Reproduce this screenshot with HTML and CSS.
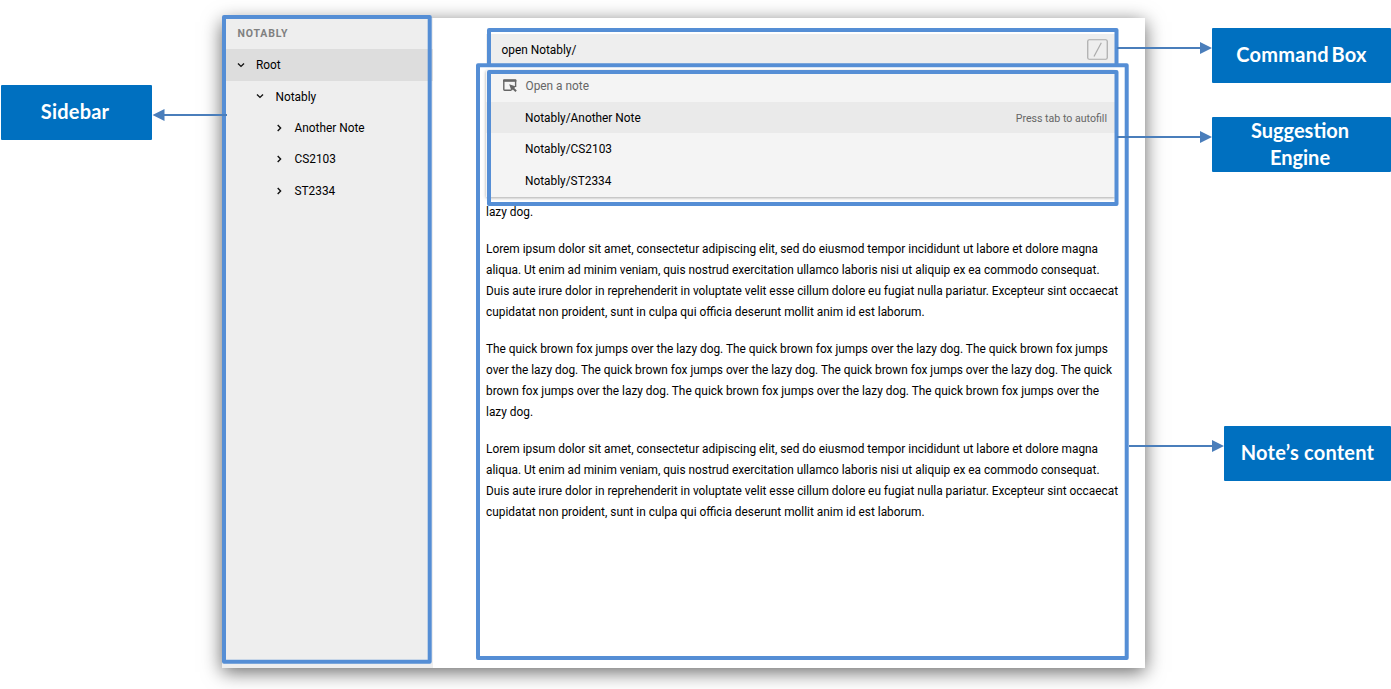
FILE: index.html
```html
<!DOCTYPE html>
<html lang="en">
<head>
<meta charset="utf-8">
<title>Notably</title>
<link rel="stylesheet" href="styles.css">
</head>
<body>
<div class="window">
  <aside class="sidebar">
    <h1 class="brand">NOTABLY</h1>
    <div class="node root"><svg class="chev" viewBox="0 0 8 8"><path d="M1 2.5 4 5.4 7 2.5"/></svg><span>Root</span></div>
    <div class="node level1"><svg class="chev" viewBox="0 0 8 8"><path d="M1 2.5 4 5.4 7 2.5"/></svg><span>Notably</span></div>
    <div class="node level2"><svg class="chev" viewBox="0 0 8 8"><path d="M2.7 1 5.6 4 2.7 7"/></svg><span>Another Note</span></div>
    <div class="node level2"><svg class="chev" viewBox="0 0 8 8"><path d="M2.7 1 5.6 4 2.7 7"/></svg><span>CS2103</span></div>
    <div class="node level2"><svg class="chev" viewBox="0 0 8 8"><path d="M2.7 1 5.6 4 2.7 7"/></svg><span>ST2334</span></div>
  </aside>
  <main class="main">
    <div class="command"><span>open Notably/</span>
      <svg class="slash" viewBox="0 0 21 21"><rect x=".75" y=".75" width="19.5" height="19.5" rx="1.5"/><path d="M7 17.5 14.3 3.8"/></svg>
    </div>
    <div class="suggestions">
      <div class="row heading">
        <svg class="open-icon" viewBox="0 0 14 14"><path class="frame" d="M8 11.3H1.5Q.8 11.3.8 10.6V1.5H12.6V8"/><path class="bar" d="M.1 1.2Q.1.2 1.2.2H12.3Q13.3.2 13.3 1.2V2.8H.1Z"/><path class="bar" d="M6.2 5.2 13 7.6 11.2 8.9 13.8 11.6 12.4 13 9.8 10.4 8.5 12Z"/></svg>
        <span>Open a note</span>
      </div>
      <div class="row active"><span>Notably/Another Note</span><span class="hint">Press tab to autofill</span></div>
      <div class="row"><span>Notably/CS2103</span></div>
      <div class="row"><span>Notably/ST2334</span></div>
    </div>
    <article class="note">
      <p>lazy dog.</p>
      <p>Lorem ipsum dolor sit amet, consectetur adipiscing elit, sed do eiusmod tempor incididunt ut labore et dolore magna<br>aliqua. Ut enim ad minim veniam, quis nostrud exercitation ullamco laboris nisi ut aliquip ex ea commodo consequat.<br>Duis aute irure dolor in reprehenderit in voluptate velit esse cillum dolore eu fugiat nulla pariatur. Excepteur sint occaecat<br>cupidatat non proident, sunt in culpa qui officia deserunt mollit anim id est laborum.</p>
      <p>The quick brown fox jumps over the lazy dog. The quick brown fox jumps over the lazy dog. The quick brown fox jumps<br>over the lazy dog. The quick brown fox jumps over the lazy dog. The quick brown fox jumps over the lazy dog. The quick<br>brown fox jumps over the lazy dog. The quick brown fox jumps over the lazy dog. The quick brown fox jumps over the<br>lazy dog.</p>
      <p>Lorem ipsum dolor sit amet, consectetur adipiscing elit, sed do eiusmod tempor incididunt ut labore et dolore magna<br>aliqua. Ut enim ad minim veniam, quis nostrud exercitation ullamco laboris nisi ut aliquip ex ea commodo consequat.<br>Duis aute irure dolor in reprehenderit in voluptate velit esse cillum dolore eu fugiat nulla pariatur. Excepteur sint occaecat<br>cupidatat non proident, sunt in culpa qui officia deserunt mollit anim id est laborum.</p>
    </article>
  </main>
</div>

<svg class="annotations" viewBox="0 0 1391 689">
  <g class="outline">
    <rect x="224" y="17" width="205.7" height="644.7"/>
    <path d="M489 65V30H1116.5V65"/>
    <rect x="478" y="65.2" width="648.7" height="592.8"/>
    <rect x="489" y="72" width="627.5" height="132"/>
  </g>
  <g class="arrow">
    <path d="M227 115H163M1117 48H1202M1117 137H1202M1129 446H1214"/>
    <path class="head" d="M152.5 115 164.5 109V121ZM1212 48 1200 42V54ZM1212 137 1200 131V143ZM1224 446 1212 440V452Z"/>
  </g>
</svg>
<div class="label sidebar-label">Sidebar</div>
<div class="label command-label">Command Box</div>
<div class="label suggestion-label">Suggestion<br>Engine</div>
<div class="label note-label">Note’s content</div>
</body>
</html>
```
FILE: styles.css
```css
* { box-sizing: border-box; }
body {
  margin: 0;
  width: 1391px;
  height: 689px;
  overflow: hidden;
  position: relative;
  background: #fff;
  font: 11.87px/21px Roboto, "Liberation Sans", sans-serif;
  color: #000;
}
.window {
  display: flex;
  width: 923px;
  height: 650px;
  margin: 18px 0 0 222px;
  background: #fff;
  box-shadow: 0 4px 18px rgba(0, 0, 0, .6);
}
.sidebar { width: 211px; background: #eee; }
.brand {
  height: 31.3px;
  margin: 0;
  padding-left: 15.5px;
  font-size: 10.5px;
  font-weight: 700;
  line-height: 32px;
  letter-spacing: .85px;
  color: #808080;
}
.node {
  display: flex;
  align-items: center;
  gap: 11.5px;
  height: 31.4px;
  padding-left: 14.5px;
}
.node span, .row span { padding-top: 1.4px; }
.root { background: #ddd; }
.level1 { padding-left: 34px; }
.level2 { padding-left: 53px; }
.chev {
  width: 8px;
  height: 8px;
  fill: none;
  stroke: #111;
  stroke-width: 1.4;
}
.main { width: 712px; padding: 15.7px 30px 0 53px; }
.command {
  display: flex;
  align-items: center;
  justify-content: space-between;
  height: 31.3px;
  padding: 0 7px 0 15.5px;
  background: #eee;
}
.command span { padding-top: 1.5px; }
.slash { width: 21px; height: 21px; fill: none; stroke: #aaa; stroke-width: 1.2; }
.suggestions {
  height: 126.5px;
  margin-top: 5.5px;
  background: #f4f4f4;
  box-shadow: 0 1px 3px rgba(0, 0, 0, .35);
}
.row {
  display: flex;
  align-items: center;
  justify-content: space-between;
  height: 31.5px;
  padding: 0 8px 0 39px;
}
.heading {
  justify-content: flex-start;
  gap: 9px;
  padding-left: 16.5px;
  color: #666;
}
.active { background: #eaeaea; }
.open-icon { width: 14px; height: 14px; }
.frame { fill: none; stroke: #666; stroke-width: 1.4; }
.bar { fill: #666; }
.row .hint { font-size: 10.6px; color: #666; }
.note { padding-top: 5.2px; line-height: 21.03px; white-space: nowrap; }
.note p { margin: 0 0 15.9px; }

.annotations { position: absolute; left: 0; top: 0; width: 1391px; height: 689px; }
.outline { fill: none; stroke: #558ed5; stroke-width: 4; stroke-linejoin: round; }
.arrow { fill: none; stroke: #4a7ebb; stroke-width: 2; }
.head { fill: #4a7ebb; stroke: none; }
.label {
  position: absolute;
  display: flex;
  align-items: center;
  justify-content: center;
  height: 55px;
  padding-bottom: 2px;
  border-radius: 1px;
  background: #0070c0;
  color: #fff;
  font: 700 20px/27px Lato, sans-serif;
  text-align: center;
}
.sidebar-label { left: 1px; top: 85px; width: 151px; padding-right: 3px; letter-spacing: .2px; }
.command-label { left: 1212px; top: 28px; width: 179px; word-spacing: -2.5px; letter-spacing: .25px; }
.suggestion-label { left: 1212px; top: 117px; width: 179px; padding-right: 3px; }
.note-label { left: 1224px; top: 426px; width: 167px; letter-spacing: .22px; }
```
